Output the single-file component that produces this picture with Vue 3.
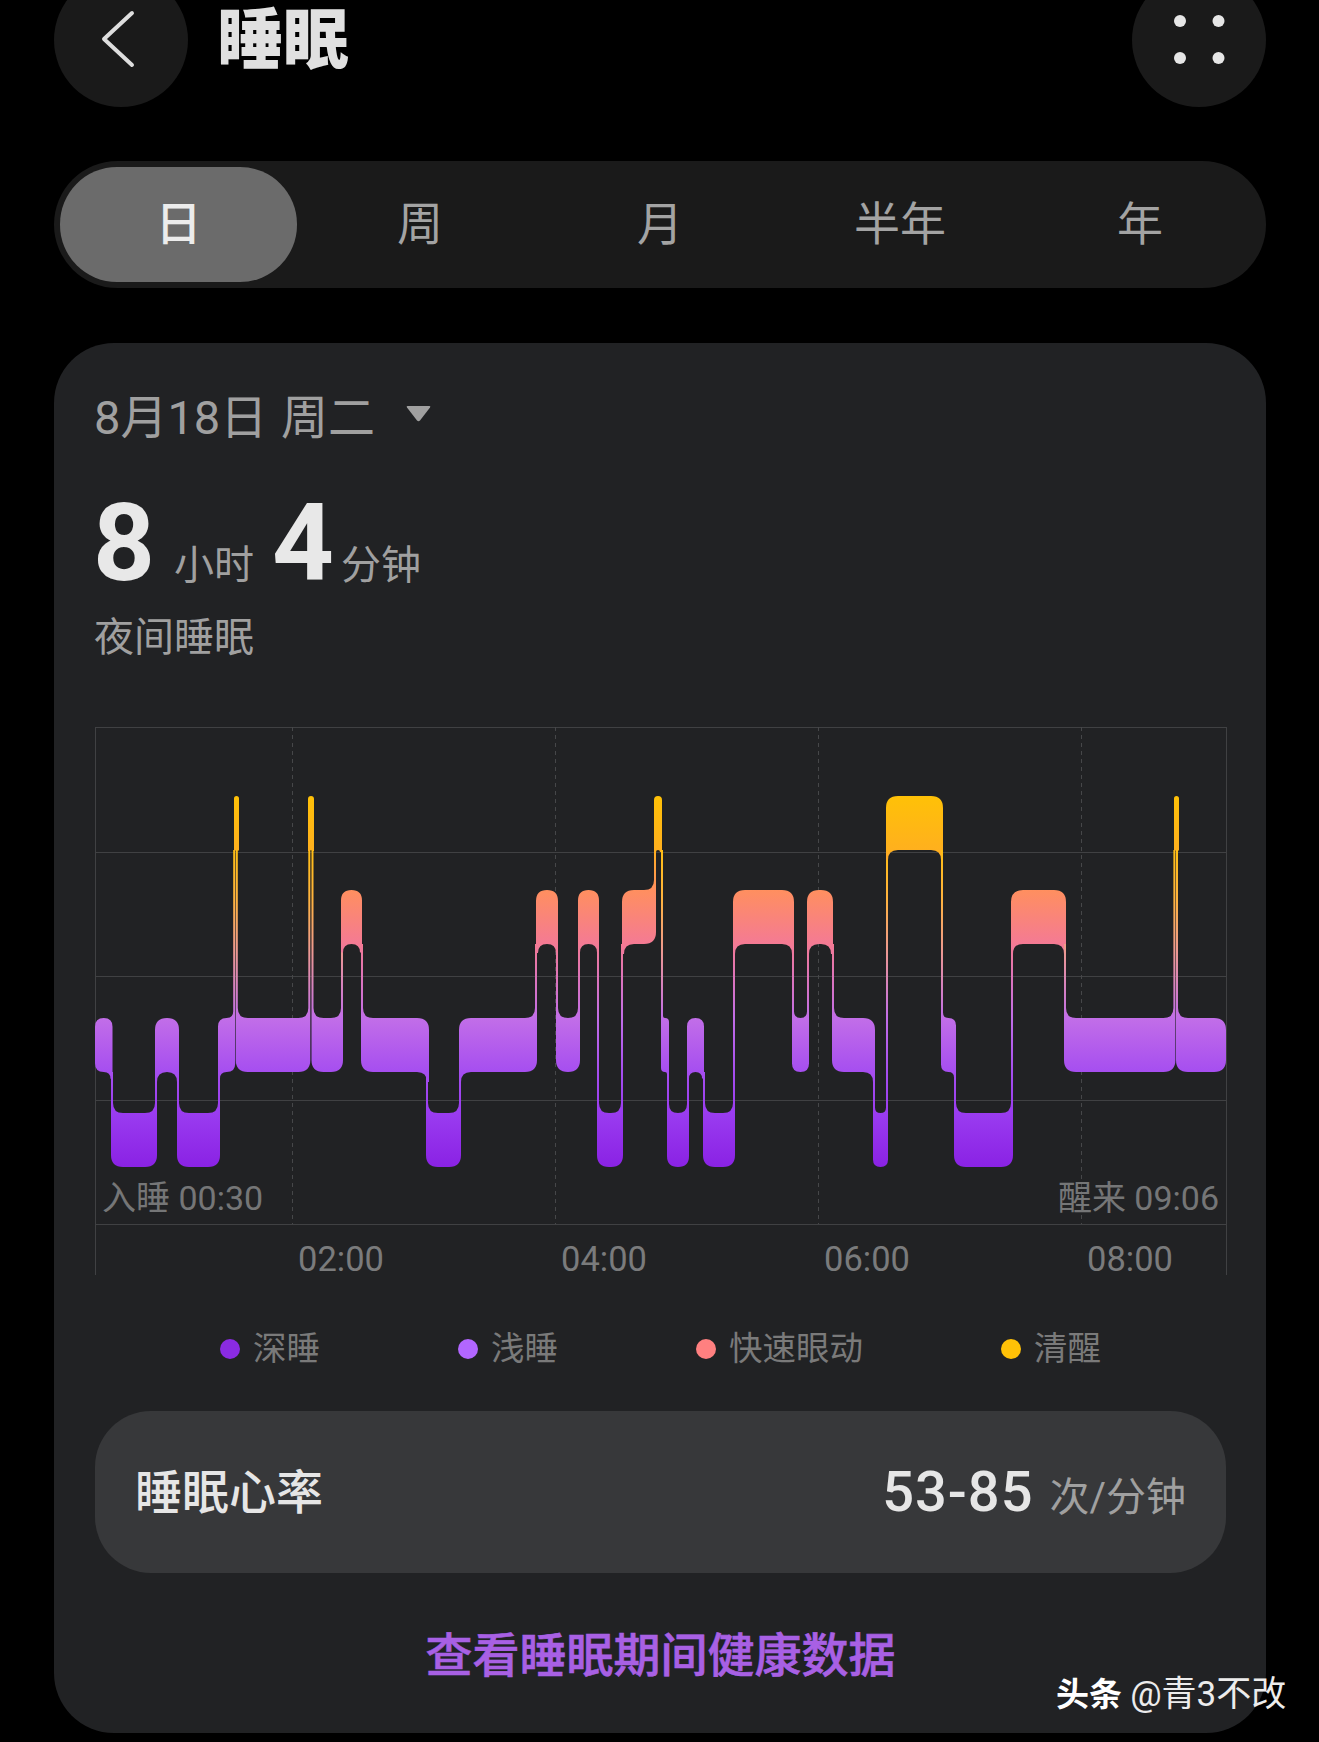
<template>
  <div class="page">
    <header class="top">
      <div class="round-btn">
        <svg viewBox="0 0 134 134" width="134" height="134">
          <polyline points="78,40 50,66 78,92" fill="none" stroke="#dedede" stroke-width="4" stroke-linecap="round" stroke-linejoin="round" />
        </svg>
      </div>
      <h1 class="title">睡眠</h1>
      <div class="round-btn more">
        <svg viewBox="0 0 134 134" width="134" height="134">
          <circle v-for="d in moreDots" :key="d.join()" :cx="d[0]" :cy="d[1]" r="6" fill="#e6e6e6" />
        </svg>
      </div>
    </header>

    <nav class="tabs">
      <div v-for="(t, i) in tabs" :key="t" class="tab" :class="{ active: i === 0 }">{{ t }}</div>
    </nav>

    <section class="card">
      <div class="date">
        <span>8月18日 周二</span>
        <svg viewBox="0 0 25 17" width="25" height="17" class="caret">
          <path d="M1.5 1 H23.5 Q25 1 24 2.5 L14 15.5 Q12.5 17 11 15.5 L1 2.5 Q0 1 1.5 1 Z" fill="#a0a0a0" />
        </svg>
      </div>

      <div class="total">
        <b>8</b><span class="unit first">小时</span><b class="second">4</b><span class="unit">分钟</span>
      </div>
      <div class="kind">夜间睡眠</div>

      <svg class="chart" viewBox="95 727 1132 548" width="1132" height="548">
        <defs>
          <linearGradient id="stages" gradientUnits="userSpaceOnUse" x1="0" y1="796" x2="0" y2="1167">
            <stop v-for="s in gradStops" :key="s[0]" :offset="(s[0] - 796) / 371" :stop-color="s[1]" />
          </linearGradient>
          <linearGradient id="stages-awake" gradientUnits="userSpaceOnUse" x1="0" y1="796" x2="0" y2="1167">
            <stop v-for="s in awakeStops" :key="s[0]" :offset="(s[0] - 796) / 371" :stop-color="s[1]" />
          </linearGradient>
        </defs>
        <line v-for="y in gridY" :key="y" x1="95" x2="1227" :y1="y + 0.5" :y2="y + 0.5" class="grid" />
        <line x1="95.5" x2="95.5" y1="727" y2="1275" class="grid" />
        <line x1="1226.5" x2="1226.5" y1="727" y2="1275" class="grid" />
        <line v-for="x in gridX" :key="x" :x1="x + 0.5" :x2="x + 0.5" y1="727" y2="1224" class="dash" />

        <path v-for="(p, i) in stagePaths" :key="i" :d="p.d" :fill="p.fill" />

        <text x="102" y="1210" class="edge">入睡 00:30</text>
        <text x="1219" y="1210" text-anchor="end" class="edge">醒来 09:06</text>
        <text v-for="t in ticks" :key="t.label" :x="t.x" y="1271" class="tick">{{ t.label }}</text>
      </svg>

      <div class="legend">
        <div v-for="l in legend" :key="l.label" class="legend-item">
          <i :style="{ background: l.color }"></i>{{ l.label }}
        </div>
      </div>

      <div class="rate">
        <span class="rate-name">睡眠心率</span>
        <span class="rate-val"><b>53-85</b><em>次/分钟</em></span>
      </div>

      <div class="link">查看睡眠期间健康数据</div>
    </section>

    <div class="mark"><b>头条</b> <span>@青3不改</span></div>
  </div>
</template>

<script setup>
const tabs = ['日', '周', '月', '半年', '年']
const moreDots = [[48, 48], [86.5, 48], [48, 85], [86.5, 85]]

const gridY = [727, 852, 976, 1100, 1224]
const gridX = [292, 555, 818, 1081]
const ticks = [
  { label: '02:00', x: 298 },
  { label: '04:00', x: 561 },
  { label: '06:00', x: 824 },
  { label: '08:00', x: 1087 },
]
const legend = [
  { label: '深睡', color: '#8a2be2' },
  { label: '浅睡', color: '#b266ff' },
  { label: '快速眼动', color: '#ff8080' },
  { label: '清醒', color: '#ffc107' },
]

// top and bottom of each sleep stage band
const bands = {
  A: [796, 850],
  R: [890, 944],
  L: [1018, 1072],
  D: [1113, 1167],
}

const gradStops = [
  [796, '#ffc107'],
  [850, '#ffb01e'],
  [890, '#ff8f5f'],
  [944, '#f47a94'],
  [1018, '#c26ee8'],
  [1072, '#a64ef0'],
  [1113, '#9a3cf0'],
  [1167, '#8a22e4'],
]

// lines that run straight down from awake skip the rem colours
const awakeStops = [
  [796, '#ffc107'],
  [850, '#ffbe14'],
  [900, '#ffb340'],
  [950, '#ee9a90'],
  [1018, '#c26ee8'],
  [1072, '#a64ef0'],
  [1113, '#9a3cf0'],
  [1167, '#8a22e4'],
]

const segs = [
  ['L', 95, 112.5], ['D', 111, 157], ['L', 155, 179], ['D', 177, 220], ['L', 218, 235.2],
  ['A', 234, 239], ['L', 235.8, 310.3], ['A', 308, 314], ['L', 311.5, 343], ['R', 341, 362],
  ['L', 361, 429], ['D', 426, 461], ['L', 459, 537], ['R', 536, 558], ['L', 556, 580],
  ['R', 578, 599], ['D', 597, 623], ['R', 622, 656], ['A', 654, 662], ['L', 661, 669],
  ['D', 667, 689], ['L', 687, 704], ['D', 703, 735], ['R', 733, 794], ['L', 792, 809],
  ['R', 807, 833], ['L', 832, 875], ['D', 873, 888], ['A', 886, 943], ['L', 941, 956],
  ['D', 954, 1013], ['R', 1011, 1066], ['L', 1064, 1175.4], ['A', 1174, 1179], ['L', 1176, 1226],
]

function segPath(i) {
  const [k, x0, x1] = segs[i]
  const [t, b] = bands[k]
  const prev = segs[i - 1] && bands[segs[i - 1][0]]
  const next = segs[i + 1] && bands[segs[i + 1][0]]
  const w = 2
  const r = Math.min(12, (x1 - x0) / 2)
  const f = Math.min(10, Math.max(0, (x1 - x0 - 2 * w) / 2))
  const prevUp = prev && prev[1] < t
  const nextUp = next && next[1] < t
  const prevDown = prev && !prevUp
  const nextDown = next && !nextUp

  let d = prevUp
    ? `M${x0} ${prev[1]}L${x0 + w} ${prev[1]}L${x0 + w} ${t - f}Q${x0 + w} ${t} ${x0 + w + f} ${t}`
    : `M${x0} ${t + r}Q${x0} ${t} ${x0 + r} ${t}`
  d += nextUp
    ? `L${x1 - w - f} ${t}Q${x1 - w} ${t} ${x1 - w} ${t - f}L${x1 - w} ${next[1]}L${x1} ${next[1]}`
    : `L${x1 - r} ${t}Q${x1} ${t} ${x1} ${t + r}`
  d += nextDown
    ? `L${x1} ${b + f}L${x1 - w} ${b + f}Q${x1 - w} ${b} ${x1 - w - f} ${b}`
    : `L${x1} ${b - r}Q${x1} ${b} ${x1 - r} ${b}`
  d += prevDown
    ? `L${x0 + w + f} ${b}Q${x0 + w} ${b} ${x0 + w} ${b + f}L${x0} ${b + f}`
    : `L${x0 + r} ${b}Q${x0} ${b} ${x0} ${b - r}`

  const byAwake = k !== 'R' && (segs[i - 1]?.[0] === 'A' || segs[i + 1]?.[0] === 'A')
  return { d: d + 'Z', fill: byAwake ? 'url(#stages-awake)' : 'url(#stages)' }
}

const stagePaths = segs.map((_, i) => segPath(i))
</script>

<style scoped>
.page {
  position: relative;
  height: 1742px;
  overflow: hidden;
  padding: 0 53px 0 54px;
  box-sizing: border-box;
  background: #000;
  font-family: Roboto, "Noto Sans CJK SC", sans-serif;
}

.top {
  display: flex;
  align-items: center;
  margin-top: -27px;
  height: 134px;
}
.round-btn {
  width: 134px;
  height: 134px;
  border-radius: 50%;
  background: #1a1a1a;
  flex-shrink: 0;
}
.round-btn svg { display: block; }
.more { margin-left: auto; }
.title {
  margin: 2px 0 0 29px;
  font-size: 66px;
  line-height: 80px;
  font-weight: 900;
  color: #e0e0e0;
}

.tabs {
  display: grid;
  grid-template-columns: repeat(5, 1fr);
  height: 127px;
  margin-top: 54px;
  padding: 6px;
  box-sizing: border-box;
  border-radius: 64px;
  background: #1a1a1a;
}
.tab {
  display: flex;
  align-items: center;
  justify-content: center;
  padding-bottom: 9px;
  box-sizing: border-box;
  font-size: 46px;
  color: #a3a3a3;
}
.tab.active {
  width: 237px;
  border-radius: 57px;
  background: #6b6b6b;
  color: #ececec;
  font-weight: 500;
}

.card {
  height: 1390px;
  margin-top: 55px;
  padding: 43px 40px 0 41px;
  box-sizing: border-box;
  border-radius: 60px;
  background: #212224;
}

.date {
  display: flex;
  align-items: center;
  height: 56px;
  margin: -1px 0 1px -1px;
  font-size: 47px;
  word-spacing: 2px;
  color: #a0a0a0;
}
.caret { margin: 0 0 0 31px; }

.total {
  display: flex;
  align-items: baseline;
  height: 110px;
  margin: 47px 0 0 -2px;
  color: #a0a0a0;
  line-height: 110px;
}
.total b {
  font-size: 108px;
  font-weight: 700;
  color: #e8e8e8;
}
.total .second { margin-left: 18px; }
.unit {
  margin-left: 7px;
  font-size: 40px;
  transform: translateY(-1px);
}
.unit.first { margin-left: 19px; }

.kind {
  margin: 14px 0 0 -1px;
  font-size: 40px;
  line-height: 52px;
  color: #a0a0a0;
}

.chart {
  display: block;
  margin-top: 63px;
  overflow: visible;
}
.grid { stroke: #404143; stroke-width: 1; }
.dash { stroke: #464749; stroke-width: 1; stroke-dasharray: 4 4; }
.edge {
  font-family: Roboto, "Noto Sans CJK SC", sans-serif;
  font-size: 34px;
  fill: #757677;
}
.tick {
  font-family: Roboto, "Noto Sans CJK SC", sans-serif;
  font-size: 34.5px;
  fill: #7a7b7c;
}

.legend {
  display: flex;
  justify-content: center;
  gap: 138px;
  margin-top: 51px;
}
.legend-item {
  display: flex;
  align-items: center;
  gap: 13px;
  font-size: 33.5px;
  line-height: 46px;
  color: #7a7a7a;
}
.legend-item i {
  width: 20px;
  height: 20px;
  border-radius: 50%;
}

.rate {
  display: flex;
  align-items: center;
  justify-content: space-between;
  height: 162px;
  margin-top: 39px;
  padding: 0 40px;
  border-radius: 56px;
  background: #37383a;
}
.rate-name {
  padding-bottom: 8px;
  font-size: 47px;
  font-weight: 500;
  color: #e6e6e6;
}
.rate-val {
  display: flex;
  align-items: baseline;
  gap: 16px;
}
.rate-val b {
  font-size: 56px;
  font-weight: 500;
  letter-spacing: 1px;
  color: #e6e6e6;
}
.rate-val em {
  font-style: normal;
  font-size: 40px;
  color: #a0a0a0;
}

.link {
  margin-top: 51px;
  text-align: center;
  font-size: 47px;
  line-height: 64px;
  font-weight: 500;
  color: #a860e4;
  -webkit-text-stroke: 0.6px #a860e4;
}

.mark {
  position: absolute;
  left: 1056px;
  top: 1672px;
  font-size: 33px;
  line-height: 46px;
  color: #ececec;
  white-space: nowrap;
}
.mark b { color: #fff; }
.mark span { font-size: 35px; }
</style>

<style>
html, body { background: #000; }
</style>
